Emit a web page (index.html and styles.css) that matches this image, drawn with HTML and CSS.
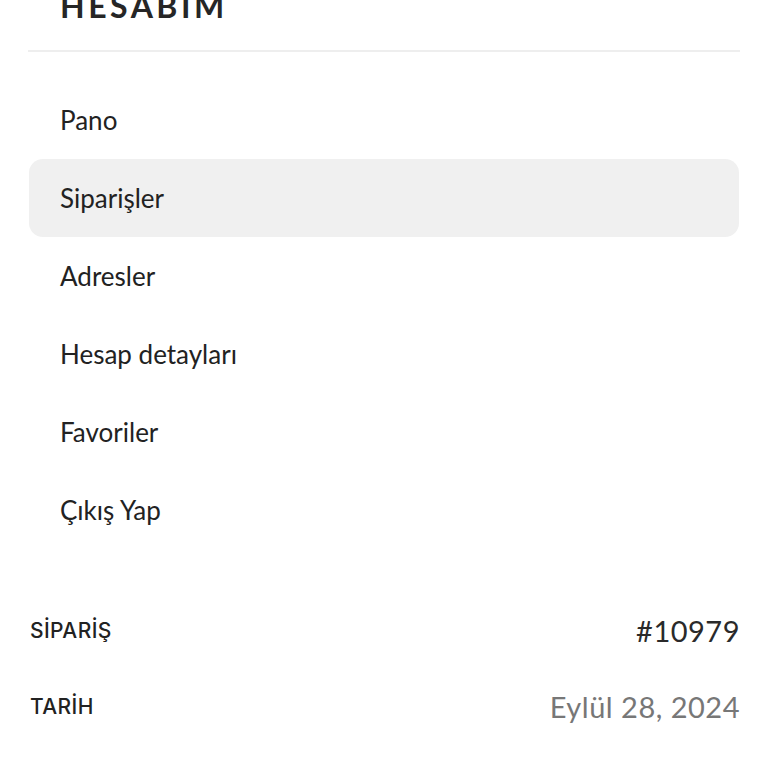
FILE: index.html
```html
<!DOCTYPE html>
<html lang="tr">
<head>
<meta charset="utf-8">
<link rel="stylesheet" href="styles.css">
</head>
<body>
<div class="page">
  <div class="account-head">
    <h2 class="account-title">HESABIM</h2>
  </div>
  <nav class="account-nav">
    <a class="nav-item">Pano</a>
    <a class="nav-item active">Siparişler</a>
    <a class="nav-item">Adresler</a>
    <a class="nav-item">Hesap detayları</a>
    <a class="nav-item">Favoriler</a>
    <a class="nav-item">Çıkış Yap</a>
  </nav>
  <div class="order-table">
    <div class="order-row">
      <span class="order-label">SİPARİŞ</span>
      <span class="order-value">#10979</span>
    </div>
    <div class="order-row">
      <span class="order-label">TARİH</span>
      <span class="order-value muted">Eylül 28, 2024</span>
    </div>
  </div>
</div>
</body>
</html>
```
FILE: styles.css
```css
html, body {
  margin: 0;
  padding: 0;
  background: #fff;
  overflow: hidden;
}
body {
  font-family: Lato, "Noto Sans", sans-serif;
  color: #222;
}
.page {
  padding: 0 28px;
  display: flex;
  flex-direction: column;
}
.account-head {
  margin-top: -11px;
  padding: 0 0 27px 32px;
  border-bottom: 2px solid #eeeeee;
}
.account-title {
  margin: 0;
  font-size: 32px;
  line-height: 34px;
  font-weight: 700;
  letter-spacing: 3.5px;
  color: #262626;
}
.account-nav {
  display: flex;
  flex-direction: column;
  margin-top: 29px;
}
.nav-item {
  display: flex;
  align-items: center;
  height: 78px;
  padding-left: 31px;
  margin-left: 1px;
  margin-right: 1px;
  font-size: 26px;
  color: #222;
  border-radius: 14px;
}
.nav-item.active {
  background: #f0f0f0;
}
.order-table {
  display: flex;
  flex-direction: column;
  margin-top: 43px;
}
.order-row {
  display: flex;
  justify-content: space-between;
  align-items: center;
  height: 76px;
  padding-left: 2px;
}
.order-label {
  font-family: Inter, "Noto Sans", sans-serif;
  font-size: 21px;
  font-weight: 500;
  letter-spacing: 0.4px;
  color: #222;
}
.order-value {
  font-size: 29px;
  color: #2a2a2a;
  letter-spacing: 0.5px;
}
.order-value.muted {
  color: #777;
}
```
